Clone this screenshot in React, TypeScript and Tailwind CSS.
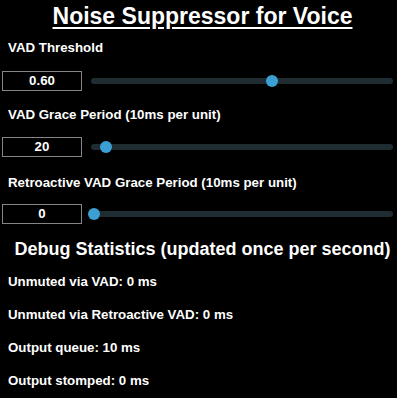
import React from "react";

interface SliderRowProps {
  label: string;
  value: number;
  display: string;
  max: number;
  labelTop: string;
  boxTop: string;
}

function SliderRow({ label, value, display, max, labelTop, boxTop }: SliderRowProps) {
  const frac = Math.min(1, Math.max(0, value / max));
  return (
    <div>
      <p className={`${labelTop} pl-2 text-[13.3px] leading-[16px] font-bold`}>{label}</p>
      <div className={`${boxTop} flex h-[20px] items-center pl-[2px] pr-[4px]`}>
        <div className="flex h-[20px] w-[80px] items-center justify-center border border-[#858585] bg-black text-[13.3px] font-bold">
          {display}
        </div>
        {/* track + thumb */}
        <div className="relative ml-[9px] h-[6px] flex-1 rounded-full bg-[#1f2d33]">
          <div
            className="absolute top-1/2 h-[12px] w-[12px] -translate-x-1/2 -translate-y-1/2 rounded-full bg-[#3c9fd4]"
            style={{ left: `calc(3px + ${frac} * (100% - 6px))` }}
          />
        </div>
      </div>
    </div>
  );
}

const stats = [
  "Unmuted via VAD: 0 ms",
  "Unmuted via Retroactive VAD: 0 ms",
  "Output queue: 10 ms",
  "Output stomped: 0 ms",
];

export default function App() {
  return (
    <div className="h-[398px] w-[397px] overflow-hidden bg-black font-['Liberation_Sans',Arial,sans-serif] text-white">
      <h1 className="pt-[2px] pl-2 text-center text-[23px] leading-[28px] font-bold underline underline-offset-[3px]">
        Noise Suppressor for Voice
      </h1>

      <SliderRow label="VAD Threshold" value={0.6} display="0.60" max={1} labelTop="mt-[10px]" boxTop="mt-[15px]" />
      <SliderRow
        label="VAD Grace Period (10ms per unit)"
        value={20}
        display="20"
        max={500}
        labelTop="mt-[16px]"
        boxTop="mt-[14px]"
      />
      <SliderRow
        label="Retroactive VAD Grace Period (10ms per unit)"
        value={0}
        display="0"
        max={500}
        labelTop="mt-[18px]"
        boxTop="mt-[13px]"
      />

      <h2 className="mt-[14px] pl-2 text-center text-[18px] leading-[22px] font-bold">
        Debug Statistics (updated once per second)
      </h2>

      <div className="mt-[14px] flex flex-col gap-[17px] pl-2">
        {stats.map((s) => (
          <p key={s} className="text-[13.3px] leading-[16px] font-bold">
            {s}
          </p>
        ))}
      </div>
    </div>
  );
}
